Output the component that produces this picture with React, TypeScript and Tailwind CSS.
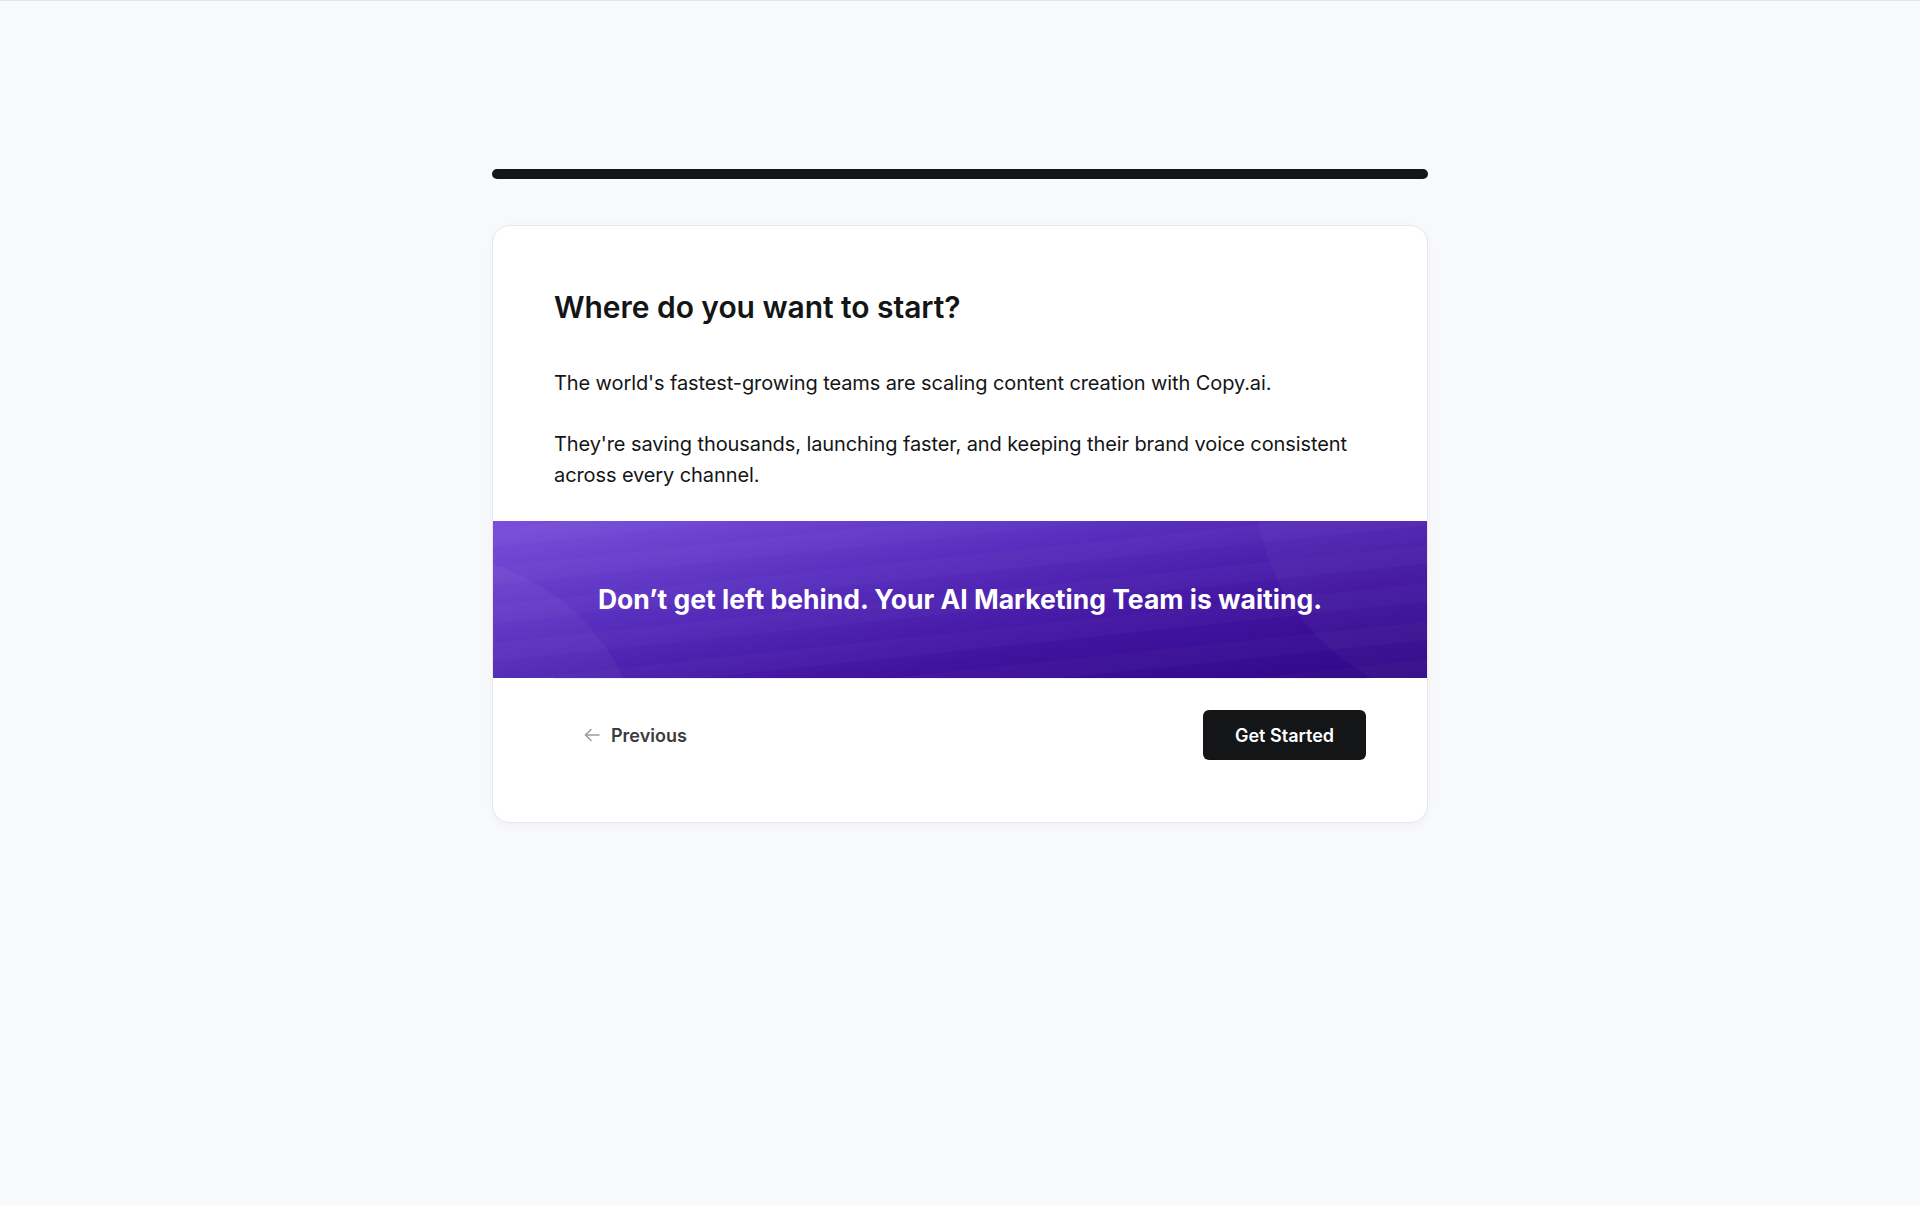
import React from 'react';

const ArrowLeft: React.FC = () => (
    <svg width="16" height="16" viewBox="0 0 16 16" fill="none" stroke="currentColor" strokeWidth="1.5" strokeLinecap="round" strokeLinejoin="round">
        <path d="M15 8H1.5" />
        <path d="M7 2.5L1.5 8L7 13.5" />
    </svg>
);

const PromoBanner: React.FC = () => (
    <div className="relative h-[157px] overflow-hidden bg-[linear-gradient(170deg,#7a50da_0%,#5a30c0_35%,#40139e_70%,#2e0785_100%)] flex items-center justify-center">
        {/* faint slanted bands */}
        <div className="absolute inset-0 bg-[repeating-linear-gradient(-6deg,rgba(255,255,255,0.02)_0px,rgba(255,255,255,0.02)_18px,rgba(255,255,255,0)_18px,rgba(255,255,255,0)_38px)]" />
        <div className="absolute left-[-279px] top-[34px] w-[430px] h-[430px] rounded-full bg-white/[0.035]" />
        <div className="absolute left-[761px] top-[-266px] w-[450px] h-[450px] rounded-full bg-white/[0.03]" />
        <p className="relative text-white text-[26.5px] font-bold">
            Don’t get left behind. Your AI Marketing Team is waiting.
        </p>
    </div>
);

export default function App() {
    return (
        <div className="min-h-[1205px] bg-[#f8f9fb] border-t border-[#e3e5ea] font-['Inter',sans-serif] text-[#141517]">
            <div className="w-[936px] mx-auto pt-[168px]">
                <div className="h-[10px] rounded-full bg-[#141517]" />

                <div className="mt-[46px] bg-white border border-[#e5e7eb] rounded-[18px] overflow-hidden shadow-[0_2px_8px_rgba(16,24,40,0.04)]">
                    <div className="px-[61px] pt-[61px] pb-[30px]">
                        <h1 className="text-[30px] leading-[40px] font-semibold tracking-[-0.05px] text-[#141517]">
                            Where do you want to start?
                        </h1>
                        <p className="mt-[41px] text-[20px] leading-[31px] tracking-[-0.1px] text-[#141517]">
                            The world's fastest-growing teams are scaling content creation with Copy.ai.
                        </p>
                        <p className="mt-[30px] text-[20px] leading-[31px] tracking-[-0.1px] text-[#141517]">
                            They're saving thousands, launching faster, and keeping their brand voice consistent across every channel.
                        </p>
                    </div>

                    <PromoBanner />

                    <div className="px-[61px]">
                        <div className="border-t border-[#eceef2] pt-[31px] pb-[62px] flex items-center justify-between">
                            <button className="flex items-center gap-[11px] pl-[30px] pr-4 h-[50px] text-[18px] font-semibold text-[#3b3b40]">
                                <span className="text-[#9a9aa2]"><ArrowLeft /></span>
                                Previous
                            </button>
                            <button className="h-[50px] w-[163px] rounded-[6px] bg-[#141517] text-white text-[18px] font-semibold">
                                Get Started
                            </button>
                        </div>
                    </div>
                </div>
            </div>
        </div>
    );
}
